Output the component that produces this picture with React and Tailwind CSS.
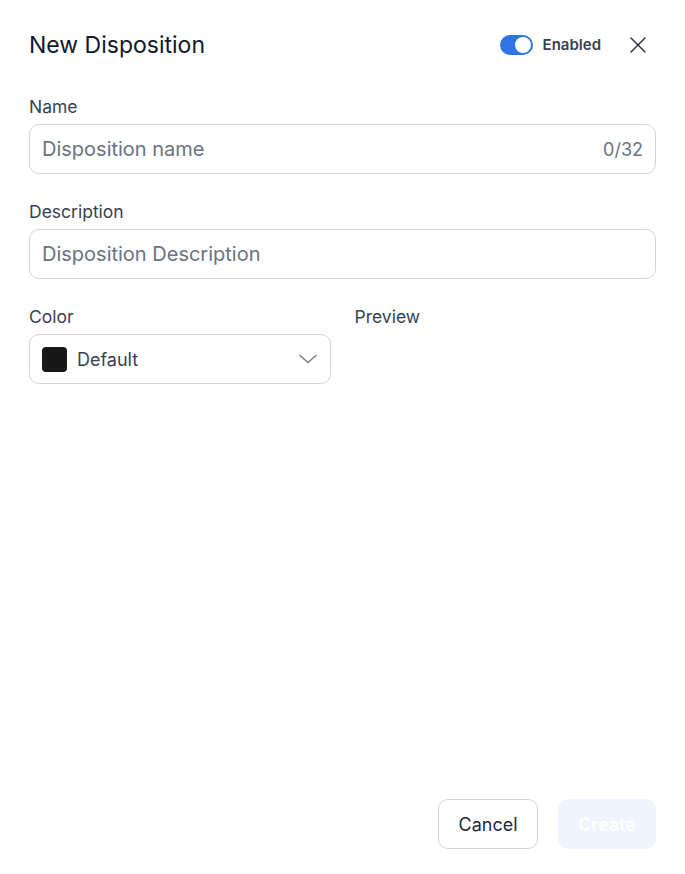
import React from "react";

export default function App() {
  return (
    <div
      className="w-[685px] h-[874px] bg-white flex flex-col px-[29px] text-[#1f2937]"
      style={{ fontFamily: "Inter, 'Noto Sans', sans-serif" }}
    >
      <div className="flex items-center justify-between h-[42px] mt-[24px]">
        <h1 className="text-[23px] text-[#111827] font-normal">New Disposition</h1>
        <div className="flex items-center">
          <div className="w-[33px] h-[20px] rounded-full bg-[#2f74e6] relative">
            <div className="absolute right-[2px] top-[2px] w-[16px] h-[16px] rounded-full bg-white" />
          </div>
          <span className="ml-[10px] text-[15px] font-semibold text-[#374151]">Enabled</span>
          <svg className="ml-[28px] mr-[9px]" width="18" height="18" viewBox="0 0 18 18" fill="none" stroke="#1f2937" strokeWidth="1.4" strokeLinecap="round">
            <path d="M2 2L16 16M16 2L2 16" />
          </svg>
        </div>
      </div>

      <label className="mt-[29px] text-[17.5px] leading-[24px] text-[#374151]">Name</label>
      <div className="mt-[5px] h-[50px] rounded-[10px] border border-[#d1d5db] flex items-center justify-between px-[12px]">
        <span className="text-[20px] text-[#6b7280]">Disposition name</span>
        <span className="text-[18px] text-[#6b7280]">0/32</span>
      </div>

      <label className="mt-[26px] text-[17.5px] leading-[24px] text-[#374151]">Description</label>
      <div className="mt-[5px] h-[50px] rounded-[10px] border border-[#d1d5db] flex items-center px-[12px]">
        <span className="text-[20px] text-[#6b7280]">Disposition Description</span>
      </div>

      <div className="mt-[26px] grid grid-cols-2 gap-x-6">
        <div className="flex flex-col">
          <label className="text-[17.5px] leading-[24px] text-[#374151]">Color</label>
          <div className="mt-[5px] h-[50px] rounded-[10px] border border-[#d1d5db] flex items-center px-[12px]">
            <div className="w-[25px] h-[25px] rounded-[4px] bg-[#181818]" />
            <span className="ml-[10px] text-[18px] text-[#374151]">Default</span>
            <svg className="ml-auto mr-[1px]" width="18" height="10" viewBox="0 0 18 10" fill="none" stroke="#6b7280" strokeWidth="1.3" strokeLinecap="round" strokeLinejoin="round">
              <path d="M1 1.5L9 8.5L17 1.5" />
            </svg>
          </div>
        </div>
        <div className="flex flex-col">
          <label className="text-[17.5px] leading-[24px] text-[#374151]">Preview</label>
        </div>
      </div>

      <div className="mt-auto mb-[25px] flex justify-end gap-[20px]">
        <button className="w-[100px] h-[50px] rounded-[10px] border border-[#d1d5db] bg-white text-[18px] text-[#1f2937]">
          Cancel
        </button>
        <button className="w-[98px] h-[50px] rounded-[10px] bg-[#eff4fe] text-[18px] font-semibold text-white">
          Create
        </button>
      </div>
    </div>
  );
}
